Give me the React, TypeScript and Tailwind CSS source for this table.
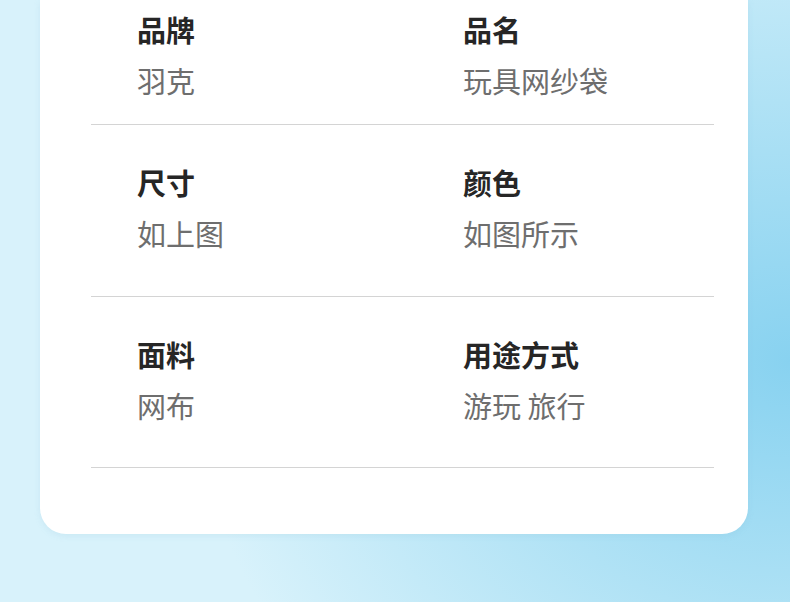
import React from 'react';

const ROWS: { label: string; value: string }[][] = [
  [
    { label: '品牌', value: '羽克' },
    { label: '品名', value: '玩具网纱袋' },
  ],
  [
    { label: '尺寸', value: '如上图' },
    { label: '颜色', value: '如图所示' },
  ],
  [
    { label: '面料', value: '网布' },
    { label: '用途方式', value: '游玩 旅行' },
  ],
];

const ROW_PAD = ['pt-[15px] pb-[29px]', 'pt-[43px] pb-[48px]', 'pt-[43px] pb-[47px]'];

const Cell: React.FC<{ label: string; value: string; className?: string }> = ({ label, value, className }) => (
  <div className={`flex flex-col ${className ?? ''}`}>
    <span className="text-[29px] leading-[29px] font-bold text-[#262626]">{label}</span>
    <span className="mt-[22px] text-[29px] leading-[29px] text-[#6e6e6e]">{value}</span>
  </div>
);

export default function App() {
  return (
    <div
      className="w-[790px] h-[602px] overflow-hidden bg-[radial-gradient(ellipse_600px_520px_at_100%_60%,#88d2f0_0%,#b0e2f5_50%,#d8f2fb_100%)]"
      style={{ fontFamily: '"Noto Sans CJK SC", "Noto Sans", sans-serif' }}
    >
      <div className="ml-[40px] w-[708px] h-[534px] bg-white rounded-b-[26px] shadow-[0_2px_6px_rgba(120,180,210,0.15)] pl-[51px] pr-[34px]">
        {ROWS.map((row, i) => (
          <div key={i} className={`flex border-b border-[#d4d4d4] pl-[46px] ${ROW_PAD[i]}`}>
            <Cell label={row[0].label} value={row[0].value} className="w-[326px]" />
            <Cell label={row[1].label} value={row[1].value} />
          </div>
        ))}
      </div>
    </div>
  );
}
